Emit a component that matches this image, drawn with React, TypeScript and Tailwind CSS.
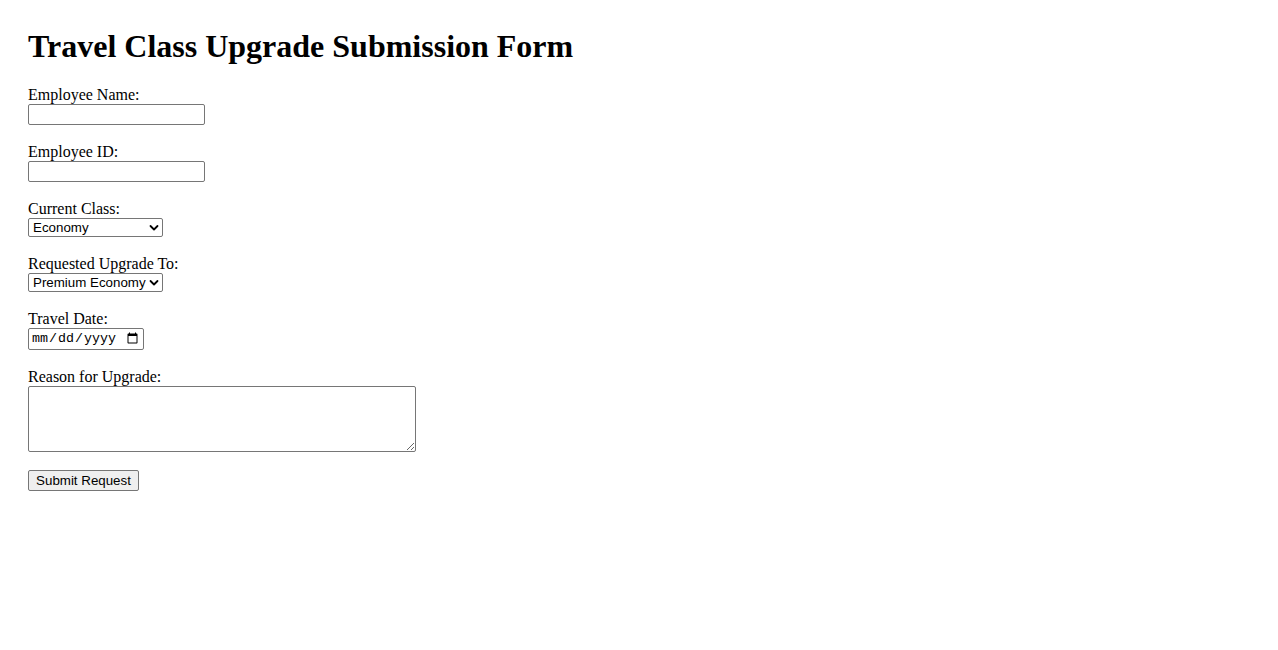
import React from "react";

const Chevron = () => (
  <svg
    className="pointer-events-none absolute right-[4px] top-1/2 -translate-y-1/2"
    width="10"
    height="7"
    viewBox="0 0 10 7"
  >
    <path d="M1.5 1.5 L5 5 L8.5 1.5" fill="none" stroke="#000" strokeWidth="1.8" strokeLinecap="round" strokeLinejoin="round" />
  </svg>
);

const labelCls = "block h-[18px] leading-[18px] text-[16px] text-black font-['Liberation_Serif',serif]";
const ctrlFont = "font-['Liberation_Sans',Arial,sans-serif] text-[13.33px] text-black";

export default function App() {
  return (
    <div className="min-h-[650px] bg-white pl-[28px] pt-[28px] font-['Liberation_Serif',serif] text-black">
      <h1 className="h-[37px] text-[32px] font-bold leading-[37px]">Travel Class Upgrade Submission Form</h1>
      <form className="mt-[21px] flex flex-col items-start gap-[18px]" onSubmit={(e) => e.preventDefault()}>
        <div className="flex flex-col items-start">
          <label className={labelCls}>Employee Name:</label>
          <input
            type="text"
            className={`h-[21px] w-[177px] rounded-[2px] border border-[#767676] bg-white px-[2px] ${ctrlFont}`}
          />
        </div>
        <div className="flex flex-col items-start">
          <label className={labelCls}>Employee ID:</label>
          <input
            type="text"
            className={`h-[21px] w-[177px] rounded-[2px] border border-[#767676] bg-white px-[2px] ${ctrlFont}`}
          />
        </div>
        <div className="flex flex-col items-start">
          <label className={labelCls}>Current Class:</label>
          <div className="relative">
            <select
              defaultValue="Economy"
              className={`block h-[19px] w-[135px] appearance-none rounded-[2px] border border-[#767676] bg-white pl-[4px] leading-[17px] ${ctrlFont}`}
            >
              <option>Economy</option>
              <option>Premium Economy</option>
              <option>Business</option>
              <option>First</option>
            </select>
            <Chevron />
          </div>
        </div>
        <div className="flex flex-col items-start">
          <label className={labelCls}>Requested Upgrade To:</label>
          <div className="relative">
            <select
              defaultValue="Premium Economy"
              className={`block h-[19px] w-[135px] appearance-none rounded-[2px] border border-[#767676] bg-white pl-[4px] leading-[17px] ${ctrlFont}`}
            >
              <option>Premium Economy</option>
              <option>Business</option>
              <option>First</option>
            </select>
            <Chevron />
          </div>
        </div>
        <div className="flex flex-col items-start">
          <label className={labelCls}>Travel Date:</label>
          <input
            type="date"
            className="h-[22px] w-[116px] rounded-[2px] border border-[#767676] bg-white px-[2px] font-['Liberation_Mono',monospace] text-[13.33px] text-black"
          />
        </div>
        <div className="flex flex-col items-start">
          <label className={labelCls}>Reason for Upgrade:</label>
          <textarea
            className={`h-[66px] w-[388px] resize rounded-[2px] border border-[#767676] bg-white px-[2px] ${ctrlFont}`}
          />
        </div>
        <button
          type="submit"
          className={`h-[21px] w-[111px] rounded-[2px] border border-[#767676] bg-[#efefef] px-[6px] ${ctrlFont}`}
        >
          Submit Request
        </button>
      </form>
    </div>
  );
}
